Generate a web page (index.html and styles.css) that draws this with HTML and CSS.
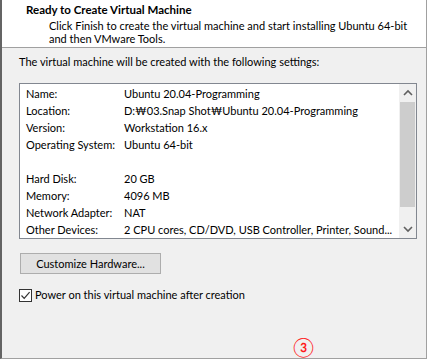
FILE: index.html
```html
<!DOCTYPE html>
<html lang="en">
<head>
    <meta charset="UTF-8">
    <title>New Virtual Machine Wizard</title>
    <link rel="stylesheet" href="styles.css">
</head>
<body>
    <div class="window">
        <div class="header">
            <h1 class="title">Ready to Create Virtual Machine</h1>
            <p class="subtitle">Click Finish to create the virtual machine and start installing Ubuntu 64-bit<br>and then VMware Tools.</p>
        </div>
        <div class="content">
            <p class="intro">The virtual machine will be created with the following settings:</p>
            <div class="settings">
                <div class="rows">
                    <div class="row"><span class="label">Name:</span><span class="value">Ubuntu 20.04-Programming</span></div>
                    <div class="row"><span class="label">Location:</span><span class="value">D:&#8361;03.Snap Shot&#8361;Ubuntu 20.04-Programming</span></div>
                    <div class="row"><span class="label">Version:</span><span class="value">Workstation 16.x</span></div>
                    <div class="row"><span class="label">Operating System:</span><span class="value">Ubuntu 64-bit</span></div>
                    <div class="row"></div>
                    <div class="row"><span class="label">Hard Disk:</span><span class="value">20 GB</span></div>
                    <div class="row"><span class="label">Memory:</span><span class="value">4096 MB</span></div>
                    <div class="row"><span class="label">Network Adapter:</span><span class="value">NAT</span></div>
                    <div class="row"><span class="label">Other Devices:</span><span class="value">2 CPU cores, CD/DVD, USB Controller, Printer, Sound...</span></div>
                </div>
                <div class="scrollbar">
                    <svg class="arrow" width="16" height="16" viewBox="0 0 16 16"><path d="M4 10 L8 6 L12 10" fill="none" stroke="#606060" stroke-width="1.6"/></svg>
                    <div class="track"><div class="thumb"></div></div>
                    <svg class="arrow" width="16" height="16" viewBox="0 0 16 16"><path d="M4 6 L8 10 L12 6" fill="none" stroke="#606060" stroke-width="1.6"/></svg>
                </div>
            </div>
            <button class="btn" type="button">Customize Hardware...</button>
            <label class="check">
                <span class="box">
                    <svg width="11" height="11" viewBox="0 0 11 11"><path d="M1.5 5.5 L4.2 8.3 L9.6 2.2" fill="none" stroke="#333" stroke-width="1.2"/></svg>
                </span>
                Power on this virtual machine after creation
            </label>
            <div class="step">&#9314;</div>
        </div>
    </div>
</body>
</html>
```

FILE: styles.css
```css
body {
    margin: 0;
    background: #ffffff;
    font-family: Lato, "Noto Sans", sans-serif;
    font-size: 11px;
    color: #000000;
}

.window {
    width: 424px;
    height: 358px;
    border-left: 2px solid #646464;
    border-right: 1px solid #a0a0a0;
    border-bottom: 1px solid #a0a0a0;
    display: flex;
    flex-direction: column;
    background: #f0f0f0;
}

.header {
    background: #ffffff;
    border-bottom: 1px solid #a0a0a0;
    padding: 2px 0 0 24px;
    box-sizing: border-box;
    height: 48px;
    white-space: nowrap;
}

.title {
    margin: 0;
    font-size: 11.5px;
    font-weight: bold;
    line-height: 16px;
}

.subtitle {
    margin: 1px 0 0 23px;
    line-height: 13px;
}

.content {
    padding: 6px 0 0 17px;
    flex: 1;
    display: flex;
    flex-direction: column;
}

.intro {
    margin: 0;
    line-height: 16px;
    white-space: nowrap;
}

.settings {
    margin-top: 13px;
    width: 398px;
    height: 156px;
    box-sizing: border-box;
    border: 1px solid #828790;
    background: #ffffff;
    display: flex;
}

.rows {
    flex: 1;
    padding: 1px 0 0 6px;
    overflow: hidden;
}

.row {
    display: flex;
    height: 17px;
    line-height: 17px;
    white-space: nowrap;
}

.label {
    width: 98px;
    flex: none;
}

.scrollbar {
    width: 17px;
    flex: none;
    background: #f0f0f0;
    display: flex;
    flex-direction: column;
    align-items: center;
}

.arrow {
    flex: none;
    margin: 1px 0;
}

.track {
    flex: 1;
    width: 100%;
    display: flex;
    flex-direction: column;
}

.thumb {
    height: 105px;
    background: #cdcdcd;
    margin: 0 1px;
}

.btn {
    margin: 14px 0 0 1px;
    width: 141px;
    height: 21px;
    border: 1px solid #adadad;
    background: #e1e1e1;
    font-family: inherit;
    font-size: 11px;
    color: #000000;
    padding: 0;
}

.check {
    margin-top: 13px;
    display: flex;
    align-items: center;
    line-height: 16px;
}

.box {
    width: 13px;
    height: 13px;
    box-sizing: border-box;
    border: 1px solid #333333;
    background: #ffffff;
    margin-right: 3px;
    display: flex;
    align-items: center;
    justify-content: center;
}

.step {
    margin: auto 0 0 274px;
    color: #ff1a1a;
    font-size: 19px;
    line-height: 20px;
    padding-bottom: 1px;
}
```
